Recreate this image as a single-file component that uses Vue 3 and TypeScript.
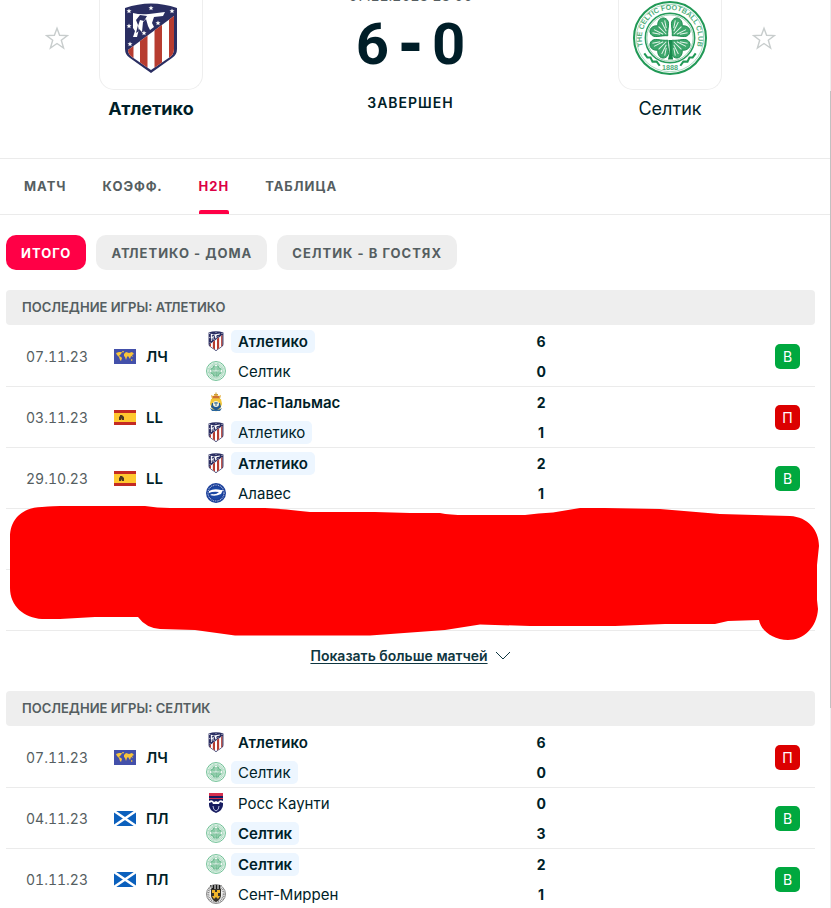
<script setup lang="ts">
import { ref } from 'vue'

interface Side {
  name: string
  logo: string
  score: number
  bold?: boolean
  marked?: boolean
}
interface Match {
  date: string
  flag: string
  league: string
  sides: Side[]
  result: 'В' | 'П'
}
interface Group {
  title: string
  matches: Match[]
  hiddenRows: number
}

const tabs = ['МАТЧ', 'КОЭФФ.', 'H2H', 'ТАБЛИЦА']
const activeTab = ref('H2H')
const filters = ['ИТОГО', 'АТЛЕТИКО - ДОМА', 'СЕЛТИК - В ГОСТЯХ']
const activeFilter = ref('ИТОГО')

const groups: Group[] = [
  {
    title: 'ПОСЛЕДНИЕ ИГРЫ: АТЛЕТИКО',
    hiddenRows: 2,
    matches: [
      { date: '07.11.23', flag: 'world', league: 'ЛЧ', result: 'В', sides: [
        { name: 'Атлетико', logo: 'atletico', score: 6, bold: true, marked: true },
        { name: 'Селтик', logo: 'celtic', score: 0 } ] },
      { date: '03.11.23', flag: 'spain', league: 'LL', result: 'П', sides: [
        { name: 'Лас-Пальмас', logo: 'palmas', score: 2, bold: true },
        { name: 'Атлетико', logo: 'atletico', score: 1, marked: true } ] },
      { date: '29.10.23', flag: 'spain', league: 'LL', result: 'В', sides: [
        { name: 'Атлетико', logo: 'atletico', score: 2, bold: true, marked: true },
        { name: 'Алавес', logo: 'alaves', score: 1 } ] },
    ],
  },
  {
    title: 'ПОСЛЕДНИЕ ИГРЫ: СЕЛТИК',
    hiddenRows: 0,
    matches: [
      { date: '07.11.23', flag: 'world', league: 'ЛЧ', result: 'П', sides: [
        { name: 'Атлетико', logo: 'atletico', score: 6, bold: true },
        { name: 'Селтик', logo: 'celtic', score: 0, marked: true } ] },
      { date: '04.11.23', flag: 'scotland', league: 'ПЛ', result: 'В', sides: [
        { name: 'Росс Каунти', logo: 'ross', score: 0 },
        { name: 'Селтик', logo: 'celtic', score: 3, bold: true, marked: true } ] },
      { date: '01.11.23', flag: 'scotland', league: 'ПЛ', result: 'В', sides: [
        { name: 'Селтик', logo: 'celtic', score: 2, bold: true, marked: true },
        { name: 'Сент-Миррен', logo: 'mirren', score: 1 } ] },
    ],
  },
]

const starPath = 'M12 2.2 14.6 9.3 22.4 9.6 16.3 14.2 18.6 22 12 17.5 5.4 22 7.7 14.2 1.6 9.6 9.4 9.3Z'
</script>

<template>
  <svg class="sprite" aria-hidden="true">
    <defs>
      <symbol id="atletico" viewBox="0 0 52 70">
        <path d="M0 5Q26-4 52 5V46Q52 52 47 55L26 70 5 55Q0 52 0 46Z" fill="#2a2e62" />
        <clipPath id="stripes"><path d="M3 47 49 13V46Q49 51 45 54L26 67 7 54Q3 51 3 47Z" /></clipPath>
        <g clip-path="url(#stripes)">
          <path d="M2 10H50V70H2Z" fill="#fff" />
          <path d="M2 10H8.500V70H2ZM15 10H22.500V70H15ZM29.500 10H37V70H29.500ZM44 10H50V70H44Z" fill="#b73c30" />
        </g>
        <path d="M8 10Q15 12 24 11L40 9 38 13 29 14 27 20 29 24 25 27 23 23 21 16 18 19 17 29 14 26 12 34H8L10 28 8 25Z" fill="#fff" />
        <path d="M15 12 22 13 19 18 15 17 13 23 14 28 11 30 13 22 11 17Z" fill="#2a2e62" />
        <g fill="#fff">
          <path v-for="p in [[4,8],[26,5],[47,8],[4,23],[33,20],[19,30],[5,41]]" :key="p.join()" :transform="`translate(${p[0]} ${p[1]})`" d="M0-2.500.7-.8 2.500-.7 1.100.5 1.600 2.300 0 1.300-1.600 2.300-1.100.5-2.500-.7-.7-.8Z" />
        </g>
      </symbol>

      <symbol id="leaf" viewBox="-11 -18 22 18" overflow="visible">
        <path d="M0-1C-4-6-11-8-10-13-9-18-3-18 0-14 3-18 9-18 10-13 11-8 4-6 0-1Z" fill="#3da76c" stroke="#16894b" stroke-width=".8" />
        <path d="M0-3V-13M-2-5-5-14M2-5 5-14M-4-7-8-13M4-7 8-13" stroke="#e4f4ea" stroke-width=".9" fill="none" />
      </symbol>
      <symbol id="clover" viewBox="-36 -36 72 72">
        <circle r="24" fill="#fff" stroke="#249b5a" stroke-width="1.500" />
        <circle r="22.500" fill="none" stroke="#75bf95" stroke-width=".7" />
        <path d="M-1.500 2Q1 12-2 21H3Q1 12 2 2Z" fill="#16894b" />
        <use v-for="a in [45, 135, 225, 315]" :key="a" href="#leaf" x="-12" y="-21" width="24" height="19" :transform="`rotate(${a})`" />
      </symbol>
      <symbol id="celtic" viewBox="-36 -36 72 72">
        <circle r="34" fill="#eef8f2" stroke="#54b582" stroke-width="3" />
        <circle r="28" fill="none" stroke="#9dd2b5" stroke-width="4" stroke-dasharray="3 2" />
        <use href="#clover" x="-36" y="-36" width="72" height="72" opacity=".75" />
      </symbol>

      <symbol id="palmas" viewBox="0 0 20 20">
        <path d="M9.500.5H10.500V2H12V3H8V2H9.500Z" fill="#ca9b35" />
        <path d="M5 3 7 4 10 2.500 13 4 15 3 14 7H6Z" fill="#e4ad3b" />
        <path d="M7 5H13" stroke="#b53334" />
        <path d="M5 7H15L16 12 14 17 10 19.500 6 17 4 12Z" fill="#f2c637" />
        <path d="M6 11H14L15 15 10 19 5 15Z" fill="#23588f" />
        <circle cx="10" cy="12" r="3" fill="#f4f1dd" />
        <path d="M8 11H12M10 10V14" stroke="#376c96" />
        <path d="M4 16Q10 20 16 16L14 19H6Z" fill="#2b669c" />
      </symbol>
      <symbol id="alaves" viewBox="0 0 20 20">
        <circle cx="10" cy="10" r="10" fill="#183d99" />
        <circle cx="10" cy="10" r="8" fill="none" stroke="#aab9dc" stroke-width="1.200" stroke-dasharray="1 .8" />
        <circle cx="10" cy="10" r="6.300" fill="#1c49a5" />
        <path d="M3 8Q8 5 15 7L17 7 15 11Q9 14 4 12L6 11Q10 12 13 9Q7 8 3 10Z" fill="#fff" />
      </symbol>
      <symbol id="ross" viewBox="0 0 20 20">
        <path d="M3 0H17V12Q17 17 10 20 3 17 3 12Z" fill="#171c60" />
        <path d="M3 0H17V3H3ZM3 5H17V6H3Z" fill="#d62f4c" />
        <path d="M3 8Q6 6 8 9L10 8 12 9Q14 6 17 8V10L14 9 13 11H7L6 9 3 10Z" fill="#fff" />
        <path d="M7 13Q7 17 10 18 13 17 13 13" stroke="#b9bfe0" fill="none" />
      </symbol>
      <symbol id="mirren" viewBox="0 0 20 20">
        <circle cx="10" cy="10" r="9.500" fill="#eee" stroke="#888" />
        <circle cx="10" cy="10" r="7.700" fill="none" stroke="#777" stroke-width="2" stroke-dasharray=".8 1" />
        <path d="M4 1H16L14 5H6Z" fill="#171717" />
        <path d="M6 1V4M9 1V5M12 1V5M15 1V4" stroke="#fff" />
        <path d="M5 5H15V12Q14 16 10 18 6 16 5 12Z" fill="#35322b" />
        <path d="M6 6H9V8H11V6H14V9H12V12H14L12 15 10 13 8 15 6 12H8V9H6Z" fill="#efb52c" />
      </symbol>

      <symbol id="world" viewBox="0 0 22 15">
        <path d="M0 0H22V15H0Z" fill="#4350aa" />
        <path d="M2 4 5 3H8L7 5 5 7 7 8 8 9 7 12 6 11 5 8 3 6ZM8 2H10L9 4ZM10 5 12 3 15 4 18 3 20 5 18 6 19 8 17 7 16 10 14 7 13 8 12 11 11 8 10 7ZM17 10 19 11 17 12Z" fill="#f8c53a" />
      </symbol>
      <symbol id="spain" viewBox="0 0 22 15">
        <path d="M0 0H22V15H0Z" fill="#c42a23" />
        <path d="M0 3H22V12H0Z" fill="#ffc82f" />
        <path d="M5 10V7L6 6V5H8L10 7V10H8V8L7 10Z" fill="#4c3820" />
      </symbol>
      <symbol id="scotland" viewBox="0 0 22 15">
        <path d="M0 0H22V15H0Z" fill="#0b60bd" />
        <path d="M0 0 22 15M22 0 0 15" stroke="#fff" stroke-width="2.500" />
      </symbol>
    </defs>
  </svg>

  <main class="page">
    <header class="duel">
      <button class="star" type="button" aria-label="Атлетико">
        <svg viewBox="0 0 24 24"><path :d="starPath" /></svg>
      </button>
      <div class="team">
        <a class="crest" href="#" aria-label="Атлетико"><svg class="shield"><use href="#atletico" /></svg></a>
        <a class="team-name winner" href="#">Атлетико</a>
      </div>
      <div class="summary">
        <time class="kickoff">07.11.2023 23:00</time>
        <div class="score"><span>6</span><span class="dash">-</span><span>0</span></div>
        <div class="status">ЗАВЕРШЕН</div>
      </div>
      <div class="team">
        <a class="crest" href="#" aria-label="Селтик">
          <svg class="roundel" viewBox="-36 -36 72 72">
            <path id="upper-arc" d="M-25.500 10A27.400 27.400 0 1 1 25.500 10" fill="none" />
            <circle r="35" fill="#fff" stroke="#219956" stroke-width="2" />
            <circle r="32.800" fill="none" stroke="#8dccaa" stroke-width=".7" />
            <use href="#clover" x="-36" y="-36" width="72" height="72" />
            <text class="ring"><textPath href="#upper-arc" startOffset="50%" text-anchor="middle">THE CELTIC FOOTBALL CLUB</textPath></text>
            <text class="ring" y="31" text-anchor="middle">1888</text>
            <path d="M-25 15-22 19-19 19-17 23-13 23-10 27M25 15 22 19 19 19 17 23 13 23 10 27" fill="none" stroke="#219956" stroke-width="2" />
          </svg>
        </a>
        <a class="team-name" href="#">Селтик</a>
      </div>
      <button class="star" type="button" aria-label="Селтик">
        <svg viewBox="0 0 24 24"><path :d="starPath" /></svg>
      </button>
    </header>

    <nav class="tabs">
      <a v-for="tab in tabs" :key="tab" href="#" :class="{ active: tab === activeTab }" @click.prevent="activeTab = tab">{{ tab }}</a>
    </nav>

    <div class="content">
      <div class="filters">
        <button v-for="filter in filters" :key="filter" type="button" :class="{ active: filter === activeFilter }" @click="activeFilter = filter">{{ filter }}</button>
      </div>

      <section v-for="group in groups" :key="group.title" class="group">
        <h2>{{ group.title }}</h2>
        <div class="matches">
          <table>
            <colgroup><col class="c-date"><col class="c-league"><col><col class="c-score"><col class="c-result"></colgroup>
            <tbody>
              <tr v-for="match in group.matches" :key="match.date">
                <td class="date">{{ match.date }}</td>
                <td>
                  <div class="league"><svg class="flag"><use :href="'#' + match.flag" /></svg>{{ match.league }}</div>
                </td>
                <td>
                  <div v-for="side in match.sides" :key="side.name" class="side">
                    <svg class="logo"><use :href="'#' + side.logo" /></svg>
                    <span class="name" :class="{ bold: side.bold, marked: side.marked }">{{ side.name }}</span>
                  </div>
                </td>
                <td><div v-for="side in match.sides" :key="side.name" class="goals">{{ side.score }}</div></td>
                <td><span class="result" :class="match.result === 'В' ? 'win' : 'loss'">{{ match.result }}</span></td>
              </tr>
              <tr v-for="n in group.hiddenRows" :key="n"><td colspan="5"></td></tr>
            </tbody>
          </table>
          <svg v-if="group.hiddenRows" class="marker" viewBox="6 505 809 136" preserveAspectRatio="none" aria-hidden="true">
            <path d="M10 537C10 518 24 507 42 507Q55 506 60 506H145Q157 508 170 508H265Q285 509 310 512H375L410 513H440Q450 515 465 515H525Q538 513 553 512.500L580 508H605L660 509 720 514 755 515 790 516C808 517 819 530 819 546L817 565V600L818 609C817 627 804 640 788 640 773 640 761 631 759 620L728 621 715 624H665L615 626H530L480 624.500 445 630 370 635.500H235L195 630 160 629Q146 628 138 617H95L60 619H42C24 618 10 606 10 588Z" />
          </svg>
        </div>
        <a v-if="group.hiddenRows" class="more" href="#">
          <span>Показать больше матчей</span>
          <svg viewBox="0 0 16 10"><path d="M1 1 8 8 15 1" /></svg>
        </a>
      </section>
    </div>
    <div class="scroll-track"><div class="scroll-thumb"></div></div>
  </main>
</template>

<style>
body {
  background: #fff;
}
</style>

<style scoped>
.sprite {
  position: absolute;
  width: 0;
  height: 0;
}
.page {
  position: relative;
  height: 100vh;
  overflow: hidden;
  font-family: Inter, "Noto Sans", sans-serif;
  font-size: 14px;
  color: #001e28;
}
a {
  color: inherit;
  text-decoration: none;
}
button {
  border: 0;
  font: inherit;
  cursor: pointer;
}
.duel {
  display: flex;
  gap: 30px;
  align-items: flex-start;
  padding: 0 55px 37px 45px;
}
.star {
  flex: none;
  width: 24px;
  height: 24px;
  margin-top: 26px;
  padding: 0;
  background: none;
}
.star svg {
  display: block;
  fill: none;
  stroke: #c8cdcd;
  stroke-width: 1.4;
}
.team {
  flex: none;
  display: flex;
  flex-direction: column;
  align-items: center;
  gap: 7px;
  width: 104px;
}
.crest {
  box-sizing: border-box;
  display: flex;
  justify-content: center;
  width: 104px;
  height: 90px;
  border: 1px solid #eee;
  border-top: 0;
  border-radius: 0 0 15px 15px;
}
.shield {
  width: 52px;
  height: 70px;
  margin-top: 3px;
}
.roundel {
  width: 74px;
  height: 74px;
  margin-top: 1px;
}
.ring {
  font-family: "Liberation Sans", sans-serif;
  font-size: 7px;
  font-weight: 700;
  fill: #4fae7b;
}
.team-name {
  font-size: 18px;
  line-height: 24px;
  white-space: nowrap;
}
.winner {
  font-weight: 700;
}
.summary {
  flex: 1;
  display: flex;
  flex-direction: column;
  align-items: center;
}
.kickoff {
  margin-top: -13px;
  font-size: 14px;
  font-variant-numeric: tabular-nums;
  line-height: 18px;
  color: #555e61;
}
.score {
  display: flex;
  align-items: center;
  gap: 4px;
  margin-top: 9px;
  font-family: Roboto, sans-serif;
  font-size: 58px;
  font-weight: 700;
  line-height: 60px;
}
.dash {
  font-family: "DejaVu Sans Mono", monospace;
}
.status {
  margin-top: 19px;
  font-weight: 600;
  line-height: 20px;
  letter-spacing: 1px;
}
.tabs {
  display: flex;
  gap: 36px;
  padding: 0 24px;
  border: 1px solid #ebebeb;
  border-width: 1px 0;
}
.tabs a {
  position: relative;
  line-height: 55px;
  font-size: 13px;
  font-weight: 700;
  letter-spacing: 1px;
  color: #555e61;
}
.tabs a.active {
  color: #dc0046;
}
.tabs a.active::after {
  content: "";
  position: absolute;
  inset: auto 0 0;
  height: 4px;
  border-radius: 2px 2px 0 0;
  background: #ff0046;
}
.content {
  padding: 20px 16px 0 6px;
}
.filters {
  display: flex;
  gap: 10px;
  margin-bottom: 20px;
}
.filters button {
  height: 35px;
  padding: 0 15px;
  border-radius: 10px;
  background: #eee;
  color: #555e61;
  font-size: 13px;
  font-weight: 700;
  letter-spacing: 1px;
}
.filters button.active {
  background: #ff0046;
  color: #fff;
}
h2 {
  margin: 0 0 1px;
  padding: 0 16px;
  border-radius: 4px;
  background: #eee;
  color: #555e61;
  font-size: 13px;
  font-weight: 600;
  line-height: 35px;
}
.matches {
  position: relative;
}
table {
  width: 100%;
  table-layout: fixed;
  border-collapse: separate;
  border-spacing: 0;
  font-size: 15px;
}
.c-date { width: 108px; }
.c-league { width: 92px; }
.c-score { width: 30px; }
.c-result { width: 32%; }
td {
  height: 60px;
  padding: 0;
  border-bottom: 1px solid #ebebeb;
}
.date {
  padding-left: 20px;
  color: #555e61;
  font-size: 14px;
  font-variant-numeric: tabular-nums;
}
.league {
  display: flex;
  align-items: center;
  gap: 10px;
  font-weight: 600;
}
.flag {
  width: 22px;
  height: 15px;
}
.side {
  display: flex;
  align-items: center;
  gap: 5px;
  height: 30px;
}
.logo {
  width: 20px;
  height: 20px;
}
.name {
  padding: 0 7px;
  border-radius: 5px;
  line-height: 23px;
}
.bold {
  font-weight: 600;
}
.marked {
  background: #edf6ff;
}
.goals {
  height: 30px;
  line-height: 32px;
  font-size: 14px;
  font-weight: 700;
  text-align: center;
}
.result {
  display: block;
  width: 25px;
  margin: 0 15px 0 auto;
  border-radius: 5px;
  color: #fff;
  font-size: 14px;
  line-height: 25px;
  text-align: center;
}
.win { background: #00a83f; }
.loss { background: #dc0000; }
.marker {
  position: absolute;
  left: 0;
  bottom: -10px;
  width: 100%;
  height: 136px;
  overflow: visible;
  fill: #f00;
}
.more {
  display: flex;
  justify-content: center;
  align-items: center;
  gap: 7px;
  padding: 15px 0 25px;
  color: #0f3640;
  font-size: 14px;
  font-weight: 600;
  line-height: 20px;
}
.more span {
  text-decoration: underline;
  text-underline-offset: 2px;
}
.more svg {
  width: 16px;
  height: 10px;
  fill: none;
  stroke: #0f3640;
}
.scroll-track {
  position: absolute;
  inset: 0 0 0 auto;
  width: 1px;
  background: #eee;
}
.scroll-thumb {
  height: 68%;
  margin-top: 91px;
  background: #c1c1c1;
}
</style>
